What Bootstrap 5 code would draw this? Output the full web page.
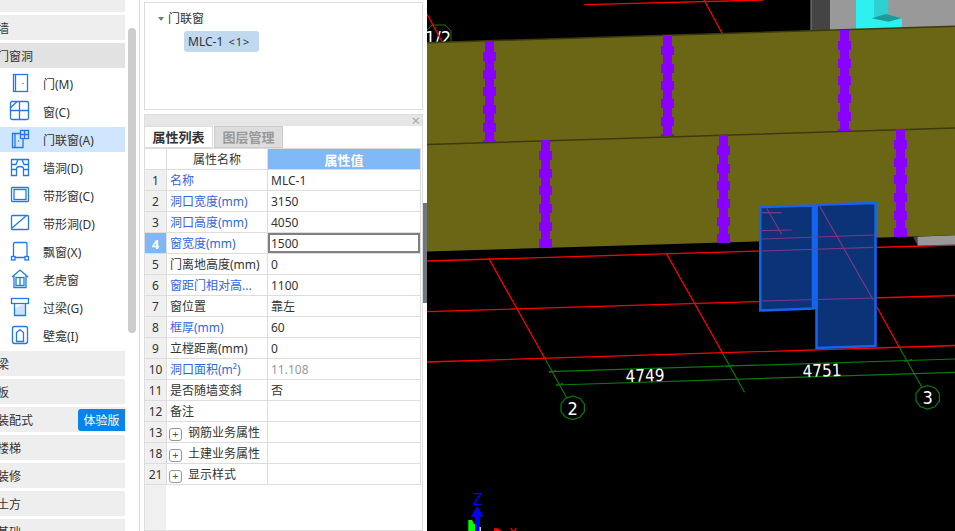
<!DOCTYPE html>
<html lang="zh-CN">

<head>
    <meta charset="UTF-8">
    <meta name="viewport" content="width=device-width, initial-scale=1.0">
    <title>门联窗属性</title>
    <link href="https://cdn.jsdelivr.net/npm/bootstrap@5.3.0/dist/css/bootstrap.min.css" rel="stylesheet">
    <style>
        html, body { height: 100%; overflow: hidden; }
        body { background: #fff; color: #333; font: 12px/1.2 "Noto Sans", "Noto Sans CJK SC", "Liberation Sans", sans-serif; }
        .app-shell { height: 531px; width: 955px; overflow: hidden; }

        /* left tree */
        .side-pane { width: 140px; flex: none; border-right: 1px solid #ddd; overflow: hidden; }
        .side-list { width: 125px; flex: none; margin-top: -13px; }
        .side-row { height: 25px; margin-bottom: 3px; padding-top: 4px; font-size: 12px; overflow: hidden; white-space: nowrap; }
        .side-group { background: #eee; }
        .side-group > span { margin-left: -3px; }
        .side-group.is-open { background: #e2e2e2; }
        .side-item svg { width: 43px; height: 25px; flex: none; margin-top: -4px; }
        .side-item.is-active { background: #d0e6ff; }
        .try-badge { background: #0a84e6; color: #fff; width: 47px; height: 22px; margin-top: -4px; border-radius: 3px 0 0 3px; text-align: center; line-height: 24px; }
        .side-thumb { width: 8px; height: 305px; margin: 28px 0 0 3px; background: #ccc; border-radius: 4px; }
        .ic { fill: none; stroke: #2277ee; stroke-width: 1.3; }

        /* middle panel */
        .mid-pane { width: 279px; flex: none; margin-left: 4px; padding-top: 2px; }
        .tree-box { height: 108px; border: 1px solid #ddd; margin-bottom: 4px; padding: 9px 0 0 13px; }
        .tree-caret { width: 0; height: 0; border: 3.5px solid transparent; border-top: 4px solid #777; border-bottom: 0; margin-right: 4px; }
        .tree-node { margin: 4.6px 0 0 26px; width: 75px; height: 21px; line-height: 21px; padding-left: 4px; background: #c0d8f0; border-radius: 3px; white-space: nowrap; }
        .tree-node small { font-size: 11px; letter-spacing: 1px; margin-left: 2px; }
        .panel-head { height: 12px; background: #e6e6e6; border: 1px solid #ddd; border-bottom: 0; color: #aaa; font-size: 15px; line-height: 10px; padding-right: 2px; }
        .prop-box { border: 1px solid #ddd; border-top: 0; background: linear-gradient(90deg, #f0f0f0 21px, #fff 21px); }
        .prop-tabs { height: 22px; background: #fff; flex-wrap: nowrap; margin-left: -1px; }
        .prop-tabs .nav-link { width: 69px; height: 22px; padding: 0; margin: 0 1px 0 0; line-height: 21px; text-align: center; font-size: 13px; font-weight: 700; color: #999; background: #ddd; border: 1px solid #ccc; border-radius: 0; }
        .prop-tabs .nav-link.active { color: #333; background: #fff; border-color: #ddd; }
        .prop-table { margin: 0 0 0 -1px; width: 276px; table-layout: fixed; border-color: #ddd; font-size: 12px; color: #333; }
        .prop-table > :not(caption) > * > * { padding: 2px 3px 0; height: 21px; line-height: 18px; background: #fff; box-shadow: none; color: inherit; white-space: nowrap; overflow: hidden; border-color: #ddd; }
        .prop-table > :not(caption) > * > .row-num { background: #f0f0f0; text-align: center; padding: 2px 0 0; }
        .prop-table > :not(caption) > * > .row-num.is-blank { background: #fff; }
        .prop-table > :not(caption) > * > .row-num.is-current { background: #7fb8f5; color: #fff; font-weight: 700; font-size: 13px; }
        .prop-table > :not(caption) > * > .head-name { text-align: center; }
        .prop-table > :not(caption) > * > .head-value { text-align: center; background: #80b8f8; color: #fff; font-weight: 700; font-size: 13px; }
        .prop-table > :not(caption) > * > .is-blue { color: #3366dd; }
        .prop-table > :not(caption) > * > .is-muted { color: #999; }
        .prop-table > :not(caption) > * > .is-editing { box-shadow: inset 0 0 0 2px #808080; }
        .plus-box { display: inline-block; width: 13px; height: 13px; border: 1px solid #999; border-radius: 3px; line-height: 10px; text-align: center; margin: 0 6px 0 -1px; vertical-align: -1px; color: #555; font-size: 11px; }

        /* splitter and 3d view */
        .split-strip { width: 4px; flex: none; padding-top: 203px; }
        .split-grip { height: 100px; background: #6f7780; }
        .view-pane { width: 528px; flex: none; background: #000; }
        .view-pane svg { display: block; }
        .view-pane text { font-family: "DejaVu Sans Condensed", "DejaVu Sans", sans-serif; fill: #fff; }
        .stud-set { shape-rendering: crispEdges; }
    </style>
</head>

<body>
    <div class="app-shell d-flex">
        <div class="side-pane d-flex">
            <div class="side-list">
                <div class="side-row side-group d-flex align-items-center"><span style="margin-top:-22px">柱</span></div>
                <div class="side-row side-group d-flex align-items-center"><span>墙</span></div>
                <div class="side-row side-group is-open d-flex align-items-center"><span>门窗洞</span></div>

                <div class="side-row side-item d-flex align-items-center">
                    <svg viewBox="0 0 43 25"><rect class="ic" x="13.500" y="3.500" width="14" height="17"/><path class="ic" d="M15.500 3.500V20.500"/><circle cx="23" cy="12.500" r=".7" fill="#2277ee"/></svg>门(M)
                </div>
                <div class="side-row side-item d-flex align-items-center">
                    <svg viewBox="0 0 43 25"><rect class="ic" x="10.500" y="2.500" width="18" height="18" rx="1.500"/><path class="ic" d="M19.500 2.500V20.500M10.500 11.500H28.500M10.500 9L17 2.500"/></svg>窗(C)
                </div>
                <div class="side-row side-item is-active d-flex align-items-center">
                    <svg viewBox="0 0 43 25"><path class="ic" d="M20.500 6.500H12.500V20.500H23V12"/><path class="ic" d="M15 6.500V20.500"/><rect class="ic" x="20.500" y="3.500" width="8" height="8"/><path class="ic" d="M24.500 3.500V11.500M20.500 7.500H28.500"/><circle cx="18.500" cy="14" r=".7" fill="#2277ee"/></svg>门联窗(A)
                </div>
                <div class="side-row side-item d-flex align-items-center">
                    <svg viewBox="0 0 43 25"><path class="ic" d="M16.500 20.500H11.500V4.500H28.500V20.500H23.500V14Q23.500 11.500 20 11.500T16.500 14ZM11.500 9.500H16L18 4.500M28.500 9.500H24L22 4.500M11.500 14.500H16.500M23.500 14.500H28.500"/></svg>墙洞(D)
                </div>
                <div class="side-row side-item d-flex align-items-center">
                    <svg viewBox="0 0 43 25"><rect class="ic" x="11.500" y="4.500" width="17" height="14" rx="1"/><rect class="ic" x="14" y="6.500" width="12" height="10"/></svg>带形窗(C)
                </div>
                <div class="side-row side-item d-flex align-items-center">
                    <svg viewBox="0 0 43 25"><rect class="ic" x="11.500" y="4.500" width="17" height="14" rx="1"/><path class="ic" d="M12 17L26 5"/></svg>带形洞(D)
                </div>
                <div class="side-row side-item d-flex align-items-center">
                    <svg viewBox="0 0 43 25"><path class="ic" d="M13.500 17.500V5Q13.500 3.500 15 3.500H25.500Q27 3.500 27 5V17.500M15 18.500H25"/><rect class="ic" x="11.500" y="17.500" width="3.500" height="3.500"/><rect class="ic" x="25" y="17.500" width="3.500" height="3.500"/></svg>飘窗(X)
                </div>
                <div class="side-row side-item d-flex align-items-center">
                    <svg viewBox="0 0 43 25"><path class="ic" d="M12 10L20 3L28 10M14 8.500V20.500H26V8.500"/><rect class="ic" x="16" y="10.500" width="8" height="8"/><path class="ic" d="M20 10.500V18.500"/></svg>老虎窗
                </div>
                <div class="side-row side-item d-flex align-items-center">
                    <svg viewBox="0 0 43 25"><path d="M14.500 14Q20 9.500 25.500 9.500V20.500H14.500Z" fill="#cfe2fb"/><rect class="ic" x="11.500" y="3.500" width="17" height="5"/><path class="ic" d="M14.500 8.500V20.500H25.500V8.500"/></svg>过梁(G)
                </div>
                <div class="side-row side-item d-flex align-items-center">
                    <svg viewBox="0 0 43 25"><rect class="ic" x="12.500" y="3.500" width="15" height="17" rx="2"/><path class="ic" d="M16.500 18.500V9.500L20 6.500L23.500 9.500V18.500Z" fill="#e4effd"/></svg>壁龛(I)
                </div>

                <div class="side-row side-group d-flex align-items-center"><span>梁</span></div>
                <div class="side-row side-group d-flex align-items-center"><span>板</span></div>
                <div class="side-row side-group d-flex align-items-center justify-content-between"><span>装配式</span><div class="try-badge">体验版</div></div>
                <div class="side-row side-group d-flex align-items-center"><span>楼梯</span></div>
                <div class="side-row side-group d-flex align-items-center"><span>装修</span></div>
                <div class="side-row side-group d-flex align-items-center"><span>土方</span></div>
                <div class="side-row side-group d-flex align-items-center"><span>基础</span></div>
            </div>
            <div class="side-thumb"></div>
        </div>

        <div class="mid-pane d-flex flex-column">
            <div class="tree-box">
                <div class="d-flex align-items-center"><span class="tree-caret"></span>门联窗</div>
                <div class="tree-node">MLC-1 <small>&lt;1&gt;</small></div>
            </div>
            <div class="panel-head text-end">×</div>
            <div class="prop-box flex-grow-1">
                <ul class="nav prop-tabs">
                    <li class="nav-item"><a class="nav-link active" href="#">属性列表</a></li>
                    <li class="nav-item"><a class="nav-link" href="#">图层管理</a></li>
                </ul>
                <table class="table table-bordered prop-table">
                    <colgroup><col style="width:22px"><col style="width:101px"><col style="width:153px"></colgroup>
                    <tbody>
                        <tr><td class="row-num is-blank"></td><td class="head-name">属性名称</td><td class="head-value">属性值</td></tr>
                        <tr><td class="row-num">1</td><td class="is-blue">名称</td><td>MLC-1</td></tr>
                        <tr><td class="row-num">2</td><td class="is-blue">洞口宽度(mm)</td><td>3150</td></tr>
                        <tr><td class="row-num">3</td><td class="is-blue">洞口高度(mm)</td><td>4050</td></tr>
                        <tr><td class="row-num is-current">4</td><td class="is-blue">窗宽度(mm)</td><td class="is-editing">1500</td></tr>
                        <tr><td class="row-num">5</td><td>门离地高度(mm)</td><td>0</td></tr>
                        <tr><td class="row-num">6</td><td class="is-blue">窗距门相对高...</td><td>1100</td></tr>
                        <tr><td class="row-num">7</td><td>窗位置</td><td>靠左</td></tr>
                        <tr><td class="row-num">8</td><td class="is-blue">框厚(mm)</td><td>60</td></tr>
                        <tr><td class="row-num">9</td><td>立樘距离(mm)</td><td>0</td></tr>
                        <tr><td class="row-num">10</td><td class="is-blue">洞口面积(m²)</td><td class="is-muted">11.108</td></tr>
                        <tr><td class="row-num">11</td><td>是否随墙变斜</td><td>否</td></tr>
                        <tr><td class="row-num">12</td><td>备注</td><td></td></tr>
                        <tr><td class="row-num">13</td><td><span class="plus-box">+</span>钢筋业务属性</td><td></td></tr>
                        <tr><td class="row-num">18</td><td><span class="plus-box">+</span>土建业务属性</td><td></td></tr>
                        <tr><td class="row-num">21</td><td><span class="plus-box">+</span>显示样式</td><td></td></tr>
                    </tbody>
                </table>
            </div>
        </div>

        <div class="split-strip"><div class="split-grip"></div></div>

        <div class="view-pane">
            <svg width="528" height="531" viewBox="427 0 528 531">
                <defs>
                    <g id="stud">
                        <rect x="-4.500" y="0" width="9" height="100"/>
                        <rect x="-6.500" y="11" width="13" height="9"/>
                        <rect x="-6.500" y="29" width="13" height="9"/>
                        <rect x="-6.500" y="46" width="13" height="9"/>
                        <rect x="-6.500" y="64" width="13" height="9"/>
                        <rect x="-6.500" y="82" width="13" height="9"/>
                        <rect x="-6.500" y="99" width="13" height="2"/>
                    </g>
                    <g id="studLow">
                        <use href="#stud"/>
                        <rect x="-6.500" y="99" width="13" height="9"/>
                    </g>
                </defs>

                <!-- axis bubble 1/2 sits behind the beam -->
                <polygon points="432,25 445,25 451,31 451,44 426,44 426,31" fill="none" stroke="#0a7a0a"/>
                <text x="425" y="44" font-size="18">1/2</text>

                <!-- grid behind the beams -->
                <g stroke="#f00" stroke-width="1.300" fill="none">
                    <path d="M584.300 4.700L763 0M704 0L722.500 34M427 14L442 41.700"/>
                    <path d="M427 261L955 245M427 311.700L955 295.500M427 362L955 345.500"/>
                    <path d="M488.700 258.300L544.700 358.300M666.500 253.700L722.500 353"/>
                    <path d="M876.700 306.700L899 346.700"/>
                </g>

                <!-- neighbouring column -->
                <rect x="810" y="0" width="20" height="33" fill="#444"/>
                <rect x="811" y="0" width="1" height="33" fill="#666"/>
                <rect x="830" y="0" width="125" height="33" fill="#999"/>
                <rect x="856" y="0" width="32" height="33" fill="#2ef0f0"/>
                <rect x="874" y="0" width="14.300" height="17" fill="#2cd0d0"/>
                <rect x="888" y="18" width="14" height="11" fill="#2ef0f0"/>
                <polygon points="871.700,18.300 886,14 901.700,18.300 888.300,21.700" fill="#1f9a9a"/>
                <polygon points="913,236.700 955,235.300 955,244.500 917.700,245.500" fill="#444"/>
                <polygon points="917.700,236.700 955,235.300 955,244.500 917.700,245.500" fill="#999"/>

                <!-- beams -->
                <polygon points="427,42.700 955,26.300 955,235.300 427,251.500" fill="#6b6616"/>
                <path d="M427 42.700L955 26.300M427 144.500L955 128" stroke="#3d3a10" stroke-width="1.500" fill="none"/>
                <g class="stud-set" fill="#8800ff">
                    <use href="#stud" x="489.500" y="41"/>
                    <use href="#stud" x="667.500" y="35"/>
                    <use href="#stud" x="844.500" y="30"/>
                    <use href="#studLow" x="545.500" y="140"/>
                    <use href="#studLow" x="723.500" y="135"/>
                    <use href="#studLow" x="900.500" y="129"/>
                </g>

                <!-- selected door-window -->
                <g fill="#0c3278" stroke="#1464f0" stroke-width="2.500">
                    <polygon points="760.300,207 813,205.500 813,308.500 760.300,310.500"/>
                    <polygon points="816.500,204.700 875.500,203 875.500,346 816.500,348"/>
                </g>
                <rect x="812" y="205" width="5.500" height="104" fill="#1464f0"/>
                <g stroke="#7a3a80" stroke-width="1.200" fill="none">
                    <path d="M762 239L873.300 235M762 251L873.300 247.300M762 301L873.300 298"/>
                    <path d="M819 205L873.300 300M766.700 208.300L781.700 234.300M762 212.700L781.700 212.700M762 230.700L791.700 230"/>
                </g>

                <!-- axis dims -->
                <g stroke="#0a7a0a" stroke-width="1.200" fill="none">
                    <path d="M548.700 371.700L955 359M556 385L955 372.300"/>
                    <path d="M544.700 358.300L567 398.300M722.500 353L744.500 392.300M899 346.700L921.700 386.700"/>
                    <path d="M549 372.500L556 370.500M556 385.500L563 383.500M726 367L734 365M904 361.500L912 359.500"/>
                    <polygon points="572.700,396 580,398.400 584.400,404 584.400,411.600 580,417.200 572.700,419.600 565.400,417.200 561,411.600 561,404 565.400,398.400"/>
                    <polygon points="927.700,385.500 935,387.900 939.400,393.500 939.400,401.100 935,406.700 927.700,409.100 920.400,406.700 916,401.100 916,393.500 920.400,387.900"/>
                </g>
                <text x="572.700" y="414.500" text-anchor="middle" font-size="18">2</text>
                <text x="927.700" y="404" text-anchor="middle" font-size="18">3</text>
                <text x="645" y="381.500" text-anchor="middle" font-size="17" transform="rotate(-2 645 375)">4749</text>
                <text x="822" y="376.500" text-anchor="middle" font-size="17" transform="rotate(-2 822 370)">4751</text>

                <!-- axes gizmo -->
                <text x="473" y="505" font-size="15" style="fill:#00f">Z</text>
                <polygon points="468.300,520 472,520 474,524 475,524 475,531 468.300,531" fill="#0f0"/>
                <polygon points="477.300,506 483.300,516.700 480,516.700 480,531 475,531 475,516.700 470.700,516.700" fill="#00f"/>
                <rect x="479.500" y="527" width="1.500" height="4" fill="#ccc"/>
                <polygon points="494,528.300 498,528.300 501.700,531 494,531" fill="#f00"/>
                <text x="509" y="537" font-size="13" style="fill:#f00">X</text>
            </svg>
        </div>
    </div>
    <script src="https://cdn.jsdelivr.net/npm/bootstrap@5.3.0/dist/js/bootstrap.bundle.min.js"></script>
</body>

</html>
